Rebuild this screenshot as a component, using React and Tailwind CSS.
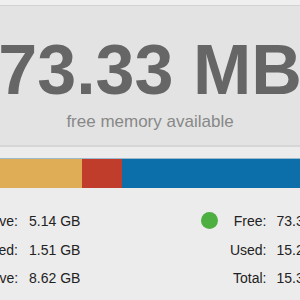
export default function App() {
  const font = { fontFamily: '"Liberation Sans", Arial, sans-serif' };
  return (
    <div className="w-[300px] h-[300px] overflow-hidden bg-[#ececec]" style={font}>
      <div className="h-[6px] bg-[#efefef] border-b border-[#d2d2d2]" />
      <div className="h-[141px] bg-[#e3e3e3] border-b-2 border-[#d6d6d6] flex flex-col items-center pt-[29px]">
        <div className="text-[70px] leading-[70px] font-bold text-[#666666] whitespace-nowrap">73.33 MB</div>
        <div className="mt-[8px] text-[17px] leading-[17px] text-[#888888] whitespace-nowrap">free memory available</div>
      </div>
      <div className="mt-[11px] h-[30px] flex border-t border-[#9bb8cc]">
        <div className="w-[82px] bg-[#e0ad57]" />
        <div className="w-[40px] bg-[#c03c2b]" />
        <div className="flex-1 bg-[#0d6fa9]" />
      </div>
      <div className="mt-[19px] flex text-[14px] leading-[28.5px] text-[#222222] whitespace-nowrap">
        <div className="-ml-[34px] w-[115px] shrink-0 grid grid-cols-[52px_auto] gap-x-[11px]">
          <div className="text-right">Active:</div>
          <div>5.14 GB</div>
          <div className="text-right">Wired:</div>
          <div>1.51 GB</div>
          <div className="text-right">Inactive:</div>
          <div>8.62 GB</div>
        </div>
        <div className="ml-[119.5px] shrink-0 grid grid-cols-[17px_37px_auto]">
          <div className="flex items-center">
            <div className="w-[17px] h-[17px] rounded-full bg-[#4caf3f] -mt-[2px]" />
          </div>
          <div className="text-right ml-[12px] w-[37px]">Free:</div>
          <div className="ml-[22px]">73.33 MB</div>
          <div />
          <div className="text-right ml-[12px] w-[37px]">Used:</div>
          <div className="ml-[22px]">15.27 GB</div>
          <div />
          <div className="text-right ml-[12px] w-[37px]">Total:</div>
          <div className="ml-[22px]">15.34 GB</div>
        </div>
      </div>
    </div>
  );
}
